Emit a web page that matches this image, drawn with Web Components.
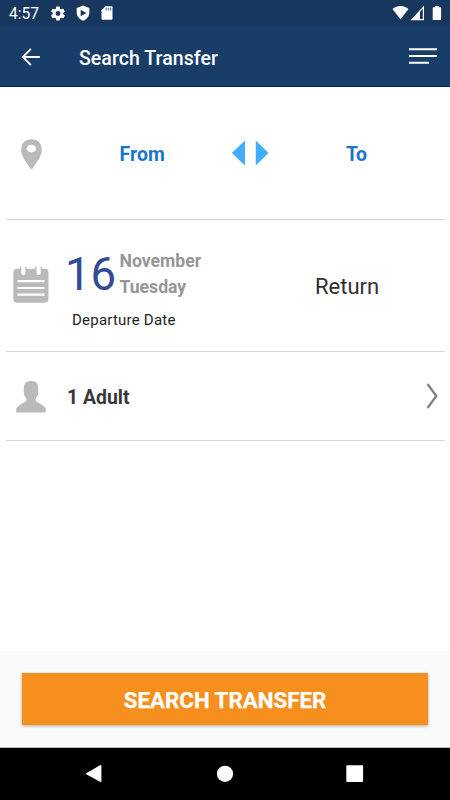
<!DOCTYPE html>
<html lang="en">
<head>
<meta charset="utf-8">
<title>Search Transfer</title>
<style>
html,body{margin:0;height:100%;background:#fff;overflow:hidden}
body{font-family:Roboto,"Liberation Sans",sans-serif}
</style>
</head>
<body>
<transfer-app></transfer-app>
<script>
function define(name, css, html) {
  customElements.define(name, class extends HTMLElement {
    constructor() {
      super();
      this.attachShadow({ mode: 'open' }).innerHTML =
        '<style>*{box-sizing:border-box}:host{box-sizing:border-box}svg{display:block;flex:none}' + css + '</style>' + html;
    }
  });
}

define('status-bar', `
  :host{display:flex;height:26px;background:#17375e;color:#fff;align-items:flex-start;padding:0 8px 0 9px}
  .time{font-size:15.6px;line-height:28px;height:26px;width:42px;white-space:nowrap}
  .gear{margin-top:6px}.shield{margin:5px 0 0 10.500px}.card{margin:6px 0 0 11px}
  .wifi{margin:5px 0 0 auto}.signal{margin:5px 0 0 1px}.battery{margin:5px 0 0 7px}
`, `
  <span class="time">4:57</span>
  <svg class="gear" width="14" height="15" viewBox="2 2 20 20" fill="#fff"><path d="M19.4 13a7.5 7.5 0 0 0 0-2l2.1-1.6c.2-.2.2-.4.1-.7l-2-3.400c-.1-.3-.4-.3-.6-.2l-2.500 1a7 7 0 0 0-1.700-1L14.500 2.400c0-.2-.3-.4-.5-.4h-4c-.3 0-.5.200-.5.400l-.4 2.700a7 7 0 0 0-1.700 1l-2.500-1c-.2-.1-.5 0-.6.2l-2 3.400c-.1.300-.1.500.1.700L4.500 11a7.500 7.500 0 0 0 0 2l-2.100 1.600c-.2.2-.2.400-.1.700l2 3.400c.1.300.4.300.6.200l2.500-1a7 7 0 0 0 1.700 1l.4 2.700c0 .2.200.4.5.4h4c.2 0 .5-.2.500-.4l.4-2.700a7 7 0 0 0 1.700-1l2.500 1c.2.1.5 0 .6-.2l2-3.400c.1-.300.1-.5-.1-.7ZM12 15.500a3.500 3.500 0 1 1 0-7 3.500 3.500 0 0 1 0 7Z"/></svg>
  <svg class="shield" width="14" height="16" viewBox="0 0 14 16"><path fill="#fff" d="M7 .5 13.300 3v4.500c0 3.700-2.700 7-6.300 8.200C3.400 14.500.7 11.200.7 7.500V3Z"/><path fill="#17375e" d="M4.700 4.800 10.400 8l-5.700 3.200Z"/></svg>
  <svg class="card" width="12" height="14" viewBox="0 0 12 14"><path fill="#fff" d="M4.500.3h6q1 0 1 1v11.500q0 1-1 1h-9q-1 0-1-1V4.300Z"/><path stroke="#17375e" stroke-opacity=".75" stroke-width="1.100" d="M5.200 1.800v2.700M7.400 1.800v2.700M9.600 1.800v2.700"/></svg>
  <svg class="wifi" width="17" height="15" viewBox="0 0 17 15"><path fill="#fff" d="M.5 4.100C5-.1 12-.1 16.500 4.100L8.500 14.300Z"/></svg>
  <svg class="signal" width="15" height="16" viewBox="0 0 15 16"><path fill="#fff" d="M14 .8V15.200H.5ZM12.800 3.800 10 6.700V13.900h2.800Z" fill-rule="evenodd"/></svg>
  <svg class="battery" width="10" height="16" viewBox="0 0 10 16"><path fill="#fff" d="M3 1h4v1.300h1.200q.9 0 .9.900v11q0 .9-.9.900H1.600q-.9 0-.9-.9v-11q0-.9.900-.9H3Z"/></svg>
`);

define('app-header', `
  :host{display:flex;height:61px;background:#173d68;border-bottom:1px solid #071f66;color:#fff;padding:0 13px 0 21px}
  .back{margin-top:21px}
  .title{margin-left:38px;font-size:19.5px;font-weight:500;letter-spacing:.06px;line-height:65px;height:60px;white-space:nowrap;flex:1}
  .menu{margin-top:21px}
`, `
  <svg class="back" width="20" height="20" viewBox="0 0 20 20" fill="none" stroke="#fff" stroke-width="1.900"><path d="M18.800 10H2M9.900 1.800 1.800 10l8.100 8.200"/></svg>
  <span class="title"><slot></slot></span>
  <svg class="menu" width="28" height="18" viewBox="0 0 28 18"><path fill="#fff" d="M0 1.200h28v2H0ZM0 8h28v2H0ZM0 14.800h20v2H0Z"/></svg>
`);

define('form-row', `
  :host{display:flex;margin:0 5.500px;border-bottom:1px solid #d5d5d5;height:var(--h)}
  .icon{width:51px;flex:none;padding:var(--icon-pad)}
  .body{flex:1;min-width:0;display:flex}
  ::slotted(*){flex:1;min-width:0}
`, `<div class="icon"><slot name="icon"></slot></div><div class="body"><slot></slot></div>`);

define('route-picker', `
  :host{display:grid;grid-template-columns:172px 43px 1fr;color:#1976ca;font-size:19.400px;font-weight:700;letter-spacing:.1px;line-height:24px;padding-top:56px;align-items:start}
  .from{padding-left:63px}.to{padding-left:74.500px;letter-spacing:-.3px}
  .swap{margin:-4px 0 0 2px}
`, `
  <span class="from">From</span>
  <svg class="swap" width="38" height="28" viewBox="0 0 38 28" fill="#42adfc"><path d="M.8 14 14 1.500v25ZM24.800 1.500 37.500 14 24.800 26.500Z"/></svg>
  <span class="to">To</span>
`);

define('date-picker', `
  :host{display:grid;grid-template-columns:1fr 1fr;white-space:nowrap}
  .date{display:flex;height:83px;padding:28px 0 0 8.500px}
  .day{font-size:45.500px;line-height:54px;color:#324c93;width:54.500px}
  .names{font-size:17.600px;font-weight:700;line-height:26px;color:#969696}
  .names div{height:26px}
  .caption{font-size:15px;letter-spacing:.22px;line-height:20px;padding-left:15.500px;margin-top:7px;color:#1e1e1e}
  .return{font-size:22px;line-height:28px;color:#303030;padding:53px 0 0 64.500px}
`, `
  <div><div class="date"><div class="day">16</div><div class="names"><div>November</div><div>Tuesday</div></div></div><div class="caption">Departure Date</div></div>
  <div class="return">Return</div>
`);

define('passenger-picker', `
  :host{display:flex;justify-content:space-between;padding:0 6px 0 10.500px}
  .label{font-size:19.400px;font-weight:700;line-height:24px;color:#383838;margin-top:34px}
  svg{margin-top:30px}
`, `<span class="label"><slot></slot></span><svg width="14" height="28" viewBox="0 0 14 28" fill="none" stroke="#808080" stroke-width="2.200"><path d="M2.500 2 11.300 14 2.500 26"/></svg>`);

define('row-icon', `
  :host{display:block}svg{display:none;fill:#bababa}
  :host([name=pin]) .pin,:host([name=calendar]) .calendar,:host([name=person]) .person{display:block}
`, `
  <svg class="pin" width="21" height="31" viewBox="0 0 21 31"><path fill-rule="evenodd" d="M10.500.3C16.500.3 20.800 4.300 20.800 11c0 6.500-5.700 13-8.800 18q-1.500 2.100-3 0C5.900 24 .2 17.500.2 11 .2 4.300 4.500.3 10.500.3Zm0 5.500c-2.700 0-4.700 1.600-4.700 3.800s2 3.800 4.700 3.800 4.700-1.600 4.700-3.800-2-3.800-4.700-3.800Z"/></svg>
  <svg class="calendar" width="36" height="37" viewBox="0 0 36 37"><rect x=".3" y="2.800" width="35.200" height="33.900" rx="4"/><path fill="none" stroke="#bababa" stroke-width="6.800" d="M10.300.8V7M25.600.8V7"/><g fill="none" stroke="#fff" stroke-width="4.200"><path stroke-linecap="round" d="M10.300-3V7.200M25.600-3V7.200"/><path stroke-width="2.200" d="M4.500 15.200h27M4.500 22h27M4.500 28.700h27"/></g></svg>
  <svg class="person" width="30" height="32" viewBox="0 0 30 32"><path d="M15 0c5 0 7.200 2.500 7.200 7v5c0 1.500-.4 2.500-1.400 3.800-1.200 1.700-2 3.700 0 5 3.700 2.400 7 3.600 9 6.700v4H.2v-4c2-3.100 5.300-4.300 9-6.700 2-1.300 1.200-3.300 0-5-1-1.300-1.400-2.300-1.400-3.800V7C7.800 2.500 10 0 15 0Z"/></svg>
`);

define('action-footer', `
  :host{display:block;height:97px;background:#fafafa;padding:22px 22px 0;border-bottom:1px solid #c0c0c0}
  button{display:block;width:100%;height:52px;border:0;padding:2px 0 0;background:#f78f1e;color:#fff;font:700 22.300px/50px Roboto,"Liberation Sans",sans-serif;-webkit-text-stroke:.25px #fff;box-shadow:0 1px 3px rgba(0,0,0,.32)}
`, `<button><slot></slot></button>`);

define('system-nav', `
  :host{display:block;height:52px;background:#000;flex:none}
  nav{display:grid;grid-template-columns:repeat(3,130px);justify-content:center;justify-items:center;padding-top:16px}
  svg:first-child{margin-right:2px}
`, `<nav>
  <svg width="20" height="20" viewBox="0 0 20 20" fill="#fff"><path d="M2.200 9.200 16.500 1q.9-.3.900.6v16q0 .8-.9.500L2.200 10.300q-.9-.6 0-1.100Z"/></svg>
  <svg width="20" height="20" viewBox="0 0 20 20" fill="#fff"><circle cx="10" cy="9.800" r="8.100"/></svg>
  <svg width="20" height="20" viewBox="0 0 20 20" fill="#fff"><rect x="1.300" y="1.300" width="16.800" height="16.800" rx="1"/></svg>
</nav>`);

define('transfer-app', `
  :host{display:flex;flex-direction:column;width:450px;height:800px;background:#fff}
  main{flex:1;min-height:0}
  .route{--h:133px;--icon-pad:52px 0 0 15px}
  .dates{--h:132px;--icon-pad:46px 0 0 7px}
  .people{--h:89px;--icon-pad:29px 0 0 10.500px}
`, `
  <status-bar></status-bar>
  <app-header>Search Transfer</app-header>
  <main>
    <form-row class="route"><row-icon slot="icon" name="pin"></row-icon><route-picker></route-picker></form-row>
    <form-row class="dates"><row-icon slot="icon" name="calendar"></row-icon><date-picker></date-picker></form-row>
    <form-row class="people"><row-icon slot="icon" name="person"></row-icon><passenger-picker>1 Adult</passenger-picker></form-row>
  </main>
  <action-footer>SEARCH TRANSFER</action-footer>
  <system-nav></system-nav>
`);
</script>
</body>
</html>
